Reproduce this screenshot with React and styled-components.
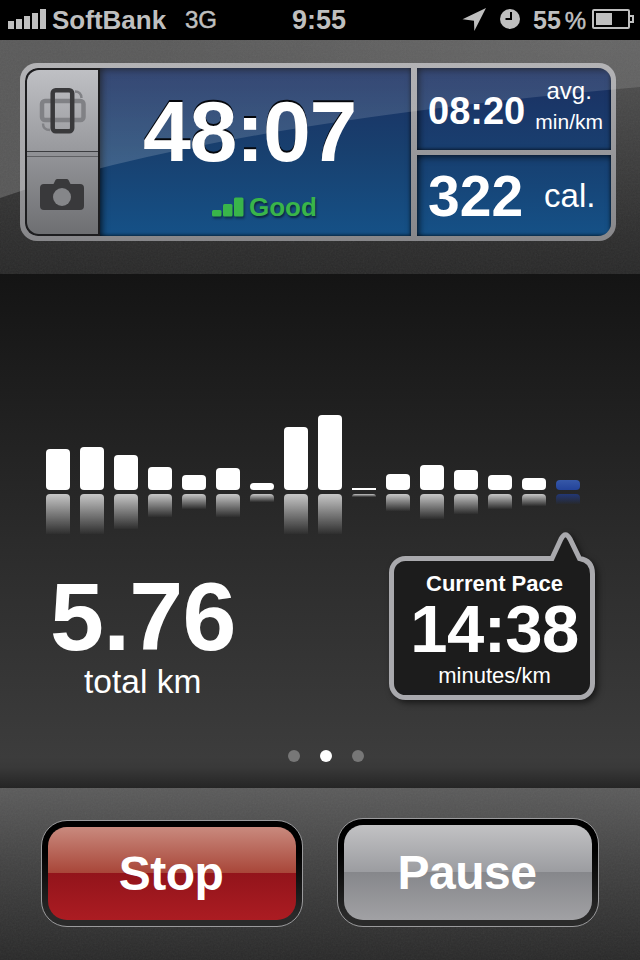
import React from 'react';
import styled, { createGlobalStyle } from 'styled-components';

const GlobalStyle = createGlobalStyle`
  * {
    box-sizing: border-box;
  }

  body {
    margin: 0;
    background-color: black;
    font-family: "Liberation Sans", Arial, Helvetica, sans-serif;
    color: white;
  }
`;

const Screen = styled.div`
  width: 640px;
  height: 960px;
  display: flex;
  flex-direction: column;
  overflow: hidden;
`;

/* status bar */

const StatusBar = styled.div`
  height: 40px;
  flex: none;
  display: grid;
  grid-template-columns: 292px 1fr 178px;
  background-color: black;
  color: #bfbfbf;
  line-height: 40px;
  font-weight: bold;
  font-size: 26px;
  white-space: nowrap;

  svg {
    display: block;
    flex: none;
  }
`;

const Carrier = styled.div`
  display: flex;
  padding-left: 8px;
`;

const CarrierName = styled.span`
  margin-left: 6px;
  width: 133px;
`;

const Network = styled.span`
  font-size: 24px;
  font-weight: normal;
  -webkit-text-stroke: 0.5px #bfbfbf;
`;

const Clock = styled.div`
  font-size: 27px;
`;

const StatusIcons = styled.div`
  display: flex;
`;

const Percent = styled.span`
  margin-left: 13px;
  width: 59px;
  font-size: 25px;

  span {
    margin-left: 4px;
    font-size: 24px;
    font-weight: normal;
    -webkit-text-stroke: 0.5px #bfbfbf;
  }
`;

/* header */

const Header = styled.div`
  position: relative;
  height: 234px;
  flex: none;
  padding: 23px 24px 0 20px;
  background: radial-gradient(ellipse 420px 200px at 90% 0, rgba(255, 255, 255, 0.07), transparent),
    linear-gradient(#484848, #353535 60%, #292929);
`;

const Grain = styled.svg`
  position: absolute;
  inset: 0;
  width: 100%;
  height: 100%;
  opacity: 0.07;
  pointer-events: none;
`;

const Gloss = styled.svg`
  position: absolute;
  inset: 0;
  z-index: 1;
  pointer-events: none;
`;

const Panel = styled.div`
  position: relative;
  width: 596px;
  height: 178px;
  padding: 5px;
  border-radius: 17px;
  background: linear-gradient(#a9a9ac, #98989b 50%, #87878a);
`;

const PanelGrid = styled.div`
  height: 168px;
  display: grid;
  grid-template-columns: 75px 311px 194px;
  grid-template-rows: 82px 81px;
  row-gap: 5px;
  border-radius: 13px;
  overflow: hidden;

  > :nth-child(3),
  > :nth-child(4) {
    grid-column: 3;
  }
`;

const SideButtons = styled.div`
  position: relative;
  z-index: 2;
  grid-row: 1 / 3;
  padding: 2px;
  display: flex;
  flex-direction: column;
  background-color: #1d1d1f;
  border-radius: 13px 0 0 13px;
`;

const SideButton = styled.button`
  height: ${(props) => (props.$lower ? '78px' : '82px')};
  padding: 0;
  border: none;
  border-top: ${(props) => (props.$lower ? '1px solid #5f6063' : 'none')};
  border-bottom: ${(props) => (props.$lower ? 'none' : '1px solid #3c3d40')};
  border-radius: ${(props) => (props.$lower ? '0 0 0 12px' : '12px 0 0 0')};
  margin-top: ${(props) => (props.$lower ? '4px' : '0')};
  box-shadow: ${(props) => (props.$lower ? '0 -4px 0 #909195' : 'none')};
  background: ${(props) =>
    props.$lower
      ? 'linear-gradient(#929397, #6e6f72)'
      : 'linear-gradient(#bfc0c4, #98999d)'};

  svg {
    display: block;
  }
`;

const Cell = styled.div`
  display: flex;
  background: ${(props) => props.$fill};
  box-shadow: inset 0 4px 7px -2px rgba(0, 0, 0, 0.55), inset 5px 0 7px -3px rgba(0, 0, 0, 0.6),
    inset -2px -2px 3px -1px rgba(0, 0, 0, 0.45);
`;

const TimeCell = styled(Cell)`
  grid-row: 1 / 3;
  flex-direction: column;
  padding: 20px 0 0 43px;
`;

const SmallCell = styled(Cell)`
  width: 194px;
  margin-left: 6px;
  padding-left: 11px;
`;

const Figure = styled.div`
  position: relative;
  z-index: 2;
  font-weight: bold;
  font-size: ${(props) => props.$size}px;
  line-height: ${(props) => props.$line || props.$size}px;
  letter-spacing: ${(props) => props.$spacing || 0}px;
  white-space: nowrap;
`;

const TimeFigure = styled(Figure)`
  text-shadow: 0 -2px 0 #05070c;
`;

const Signal = styled.div`
  position: relative;
  z-index: 2;
  display: flex;
  gap: 5px;
  margin: 20px 0 0 69px;
  color: #39b54a;
  font-size: 26px;
  font-weight: bold;
  line-height: 26px;
  text-shadow: 1px 2px 2px rgba(0, 0, 0, 0.5);

  svg {
    filter: drop-shadow(1px 2px 1px rgba(0, 0, 0, 0.4));
  }
`;

const Unit = styled.div`
  position: relative;
  z-index: 2;
  text-align: center;
  white-space: nowrap;
  font-size: ${(props) => props.$size}px;
  line-height: ${(props) => props.$line}px;
`;

const AvgUnit = styled.div`
  width: 68px;
  margin-left: 10px;
  padding-top: 8px;
`;

const CalUnit = styled(Unit)`
  margin-left: 21px;
`;

/* stage */

const Stage = styled.div`
  height: 514px;
  flex: none;
  background: linear-gradient(#141414, #1f1f1f 25%, #2c2c2c 54%, #3c3c3c 94%, #393939 96%, #252525);
`;

const Chart = styled.div`
  display: flex;
  gap: 10px;
  padding-left: 46px;
`;

const Column = styled.div`
  width: 24px;
  display: grid;
  grid-template-rows: 216px 40px;
  row-gap: 4px;
`;

const Bar = styled.div`
  align-self: end;
  border-radius: ${(props) => (props.$flat ? '0' : '4px')};
  background: ${(props) => (props.$current ? 'linear-gradient(#3658a8, #23439a)' : 'white')};
`;

const Reflection = styled.div`
  border-radius: 4px 4px 0 0;
  background: ${(props) =>
    props.$current
      ? 'linear-gradient(rgba(32, 62, 150, 0.7), rgba(32, 62, 150, 0.05))'
      : 'linear-gradient(rgba(255, 255, 255, 0.74), rgba(255, 255, 255, 0.02))'};
`;

const Metrics = styled.div`
  display: flex;
  height: 216px;
`;

const Distance = styled.div`
  width: 389px;
  padding: 34px 0 0 50px;
`;

const DistanceUnit = styled.div`
  padding-left: 34px;
  font-size: 33.5px;
  line-height: 34px;
`;

const Callout = styled.div`
  position: relative;
  width: 206px;
  height: 168px;
  margin-top: -2px;
  padding: 40px 0 0 5px;
  display: flex;
  flex-direction: column;
  align-items: center;
`;

const Bubble = styled.svg`
  position: absolute;
  inset: 0;
  overflow: visible;
  filter: drop-shadow(3px 3px 3px rgba(0, 0, 0, 0.55));
`;

const Pager = styled.div`
  display: flex;
  justify-content: center;
  gap: 20px;
  padding-left: 12px;
`;

const Dot = styled.span`
  width: 12px;
  height: 12px;
  border-radius: 50%;
  background-color: ${(props) => (props.$active ? 'white' : '#777777')};
`;

/* footer */

const Footer = styled.div`
  position: relative;
  flex: 1;
  display: flex;
  align-items: flex-end;
  gap: 34px;
  padding: 0 0 33px 41px;
  background: linear-gradient(#5b5b5b, #424242 45%, #292929);
`;

const ButtonFrame = styled.div`
  position: relative;
  width: 262px;
  height: ${(props) => props.$height}px;
  padding: 6px;
  border: 1px solid #9a9a9c;
  border-radius: 26px;
  background: linear-gradient(black, black 30%, #2a2a2a 90%);
`;

const Button = styled.button`
  display: block;
  width: 248px;
  height: 100%;
  padding: 0 2px 0 0;
  border: none;
  border-radius: 19px;
  background: ${(props) => props.$fill};
  color: white;
  font-family: inherit;
  font-weight: bold;
  font-size: 48px;
  line-height: 94px;
  letter-spacing: -0.5px;
`;

const RED = 'linear-gradient(#c98a7e, #a84538 50%, #93141b 50%, #ab1c22)';
const GRAY = 'linear-gradient(#c2c2c4, #9b9ca0 50%, #86878b 50%, #a1a1a4)';

const bars = [41, 43, 35, 23, 15, 22.5, 7.5, 63.5, 75, 2.5, 16.5, 25, 20, 15, 12, 10];

const Noise = ({ id }) => (
  <Grain>
    <filter id={id}>
      <feTurbulence type="fractalNoise" baseFrequency="0.6" numOctaves="2" />
      <feColorMatrix type="saturate" values="0.3" />
    </filter>
    <rect width="100%" height="100%" filter={`url(#${id})`} />
  </Grain>
);

const Status = () => (
  <StatusBar>
    <Carrier>
      <svg width="38" height="40" fill="#bfbfbf">
        <rect x="0" y="21" width="6" height="8" />
        <rect x="8" y="19" width="6" height="10" />
        <rect x="16" y="16" width="6" height="13" />
        <rect x="24" y="13" width="6" height="16" />
        <rect x="32" y="9" width="6" height="20" />
      </svg>
      <CarrierName>SoftBank</CarrierName>
      <Network>3G</Network>
    </Carrier>
    <Clock>9:55</Clock>
    <StatusIcons>
      <svg width="58" height="40" viewBox="462 0 58 40">
        <path d="M486 8L462.5 19.3L474 20.7L474.3 31Z" fill="#bfbfbf" />
        <circle cx="510" cy="19" r="10" fill="#bfbfbf" />
        <path d="M511 12V19H505.5" fill="none" stroke="black" strokeWidth="2" />
      </svg>
      <Percent>
        55<span>%</span>
      </Percent>
      <svg width="42" height="40">
        <rect x="1" y="10" width="36" height="18" rx="1" fill="none" stroke="#bfbfbf" strokeWidth="2" />
        <path d="M38 16H41V22H38" fill="none" stroke="#bfbfbf" strokeWidth="2" />
        <rect x="4" y="13" width="16" height="12" fill="#bfbfbf" />
      </svg>
    </StatusIcons>
  </StatusBar>
);

const App = () => {
  return (
    <Screen>
      <GlobalStyle />
      <Status />

      <Header>
        <Noise id="grainTop" />
        <Panel>
          <PanelGrid>
            <SideButtons>
              <SideButton aria-label="Rotate">
                <svg width="71" height="81" viewBox="27 70 71 81" fill="none">
                  <rect x="42" y="101" width="41.5" height="19" rx="3" stroke="#808185" strokeWidth="4.5" />
                  <path d="M75 91.5Q81 91.5 81.5 98M43 123.5Q43 130 50 130" stroke="#808185" strokeWidth="2.4" />
                  <rect x="52.7" y="90.2" width="19.5" height="41" rx="3" stroke="#39393b" strokeWidth="4.5" />
                </svg>
              </SideButton>
              <SideButton $lower aria-label="Camera">
                <svg width="71" height="77" viewBox="27 156 71 77">
                  <path
                    d="M44 183H53.5L55.5 179Q56 178 57.5 178H66.5Q68 178 68.5 179L70.5 183H80Q84 183 84 187V205Q84 209 80 209H44Q40 209 40 205V187Q40 183 44 183Z"
                    fill="#39393b"
                  />
                  <circle cx="62" cy="196" r="9" fill="#858689" />
                </svg>
              </SideButton>
            </SideButtons>
            <TimeCell $fill="linear-gradient(#1b2f61, #18406f 50%, #155187)">
              <TimeFigure $size={86} $spacing={-1.4}>48:07</TimeFigure>
              <Signal>
                <svg width="32" height="23" fill="#39b54a">
                  <rect x="0" y="16" width="9.5" height="6.5" rx="1.5" />
                  <rect x="11" y="10" width="9.5" height="12.5" rx="1.5" />
                  <rect x="22" y="3.5" width="9.5" height="19" rx="1.5" />
                </svg>
                Good
              </Signal>
            </TimeCell>
            <SmallCell $fill="linear-gradient(#1b2f61, #193f70)">
              <Figure $size={38} $line={87}>08:20</Figure>
              <AvgUnit>
                <Unit $size={24} $line={30}>avg.</Unit>
                <Unit $size={21} $line={32}>min/km</Unit>
              </AvgUnit>
            </SmallCell>
            <SmallCell $fill="linear-gradient(#173f70, #155187)">
              <Figure $size={57} $line={82}>322</Figure>
              <CalUnit $size={33} $line={82}>cal.</CalUnit>
            </SmallCell>
          </PanelGrid>
        </Panel>
        <Gloss width="640" height="234" viewBox="0 40 640 234">
          <linearGradient id="gloss" x1="0" y1="0" x2="0" y2="1">
            <stop offset="0" stopColor="white" stopOpacity="0.1" />
            <stop offset="1" stopColor="white" stopOpacity="0.18" />
          </linearGradient>
          <path d="M0 40V198Q210 125 640 87V40Z" fill="url(#gloss)" />
        </Gloss>
      </Header>

      <Stage>
        <Chart>
          {bars.map((height, i) => {
            const current = i === bars.length - 1;
            return (
              <Column key={i}>
                <Bar $current={current} $flat={height < 5} style={{ height }} />
                <Reflection $current={current} style={{ height: Math.min(height, 40) }} />
              </Column>
            );
          })}
        </Chart>
        <Metrics>
          <Distance>
            <Figure $size={97} $spacing={-0.8}>5.76</Figure>
            <DistanceUnit>total km</DistanceUnit>
          </Distance>
          <Callout>
            <Bubble width="206" height="168">
              <path
                d="M163 26.5L172 7Q176.5 -1.5 181 7L190.5 26.5Q203.5 28.5 203.5 42V151.5A14 14 0 0 1 189.5 165.5H16.5A14 14 0 0 1 2.5 151.5V40.5A14 14 0 0 1 16.5 26.5Z"
                fill="#1c1c1c"
                stroke="#a9a9ad"
                strokeWidth="5"
              />
            </Bubble>
            <Figure $size={22} $line={24}>Current Pace</Figure>
            <Figure $size={67} $line={66} $spacing={-0.6}>14:38</Figure>
            <Unit $size={22} $line={27}>minutes/km</Unit>
          </Callout>
        </Metrics>
        <Pager>
          <Dot />
          <Dot $active />
          <Dot />
        </Pager>
      </Stage>

      <Footer>
        <Noise id="grainBottom" />
        <ButtonFrame $height={107}>
          <Button $fill={RED}>Stop</Button>
        </ButtonFrame>
        <ButtonFrame $height={109}>
          <Button $fill={GRAY}>Pause</Button>
        </ButtonFrame>
      </Footer>
    </Screen>
  );
};

export default App;
